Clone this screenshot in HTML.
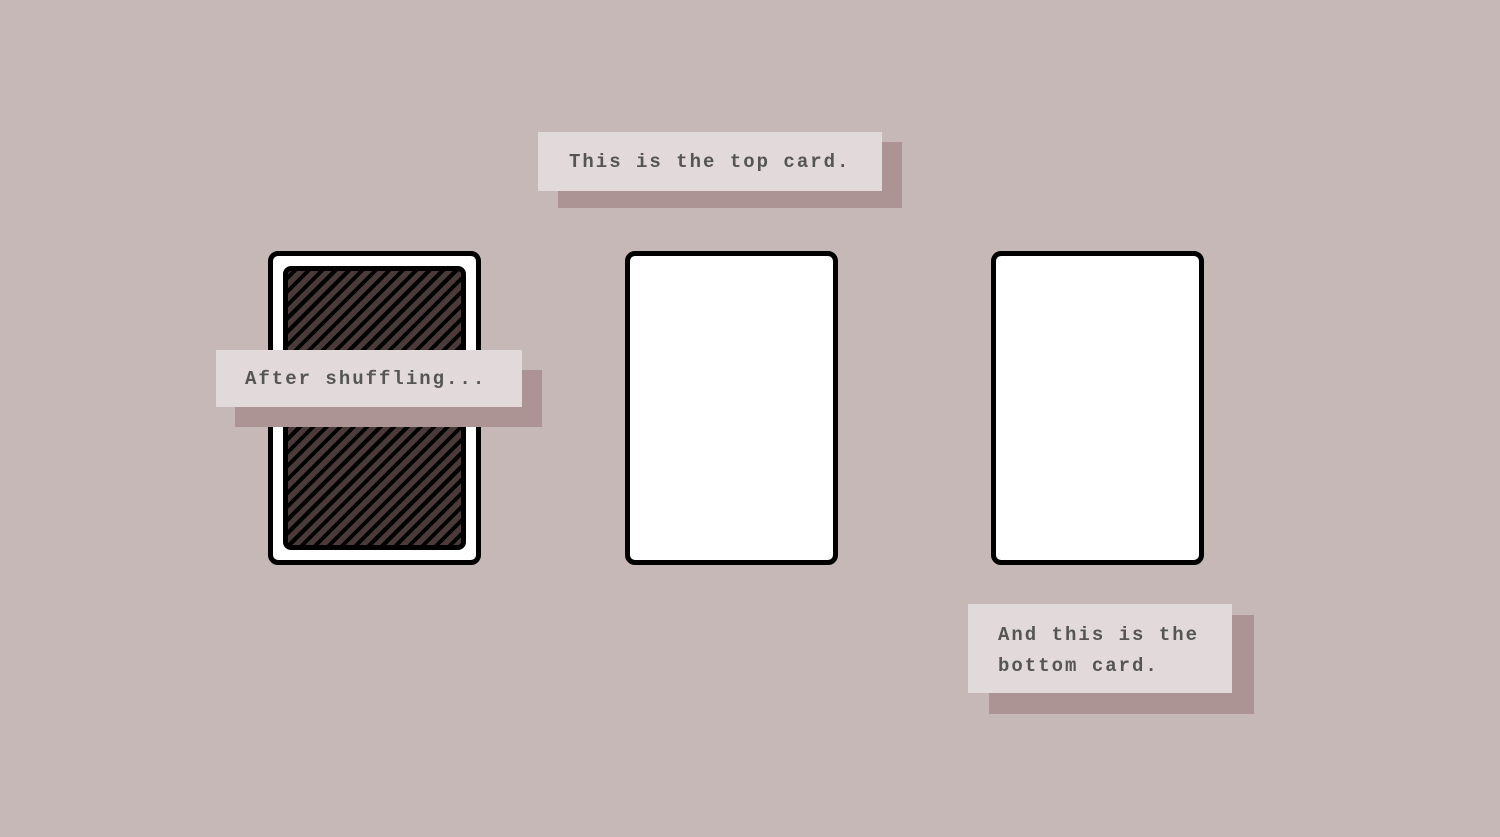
<!DOCTYPE html>
<html><head><meta charset="utf-8"><style>
body{margin:0;width:1500px;height:837px;background:#c7b8b8;position:relative;overflow:hidden;font-family:"Liberation Mono",monospace;}
.card{position:absolute;top:251px;width:203px;height:304px;border:5px solid #000;border-radius:10px;background:#fff;}
.back{position:absolute;left:10px;top:10px;right:10px;bottom:10px;border:5px solid #000;border-radius:8px;
background:repeating-linear-gradient(-45deg,#4a3a3a 0 5.5px,#000 5.5px 9.5px);}
.sh{position:absolute;background:#ad9494;}
.lb{position:absolute;background:#e2dada;color:#555;font-weight:bold;font-size:19px;letter-spacing:2.0px;box-sizing:border-box;white-space:nowrap;}
</style></head><body>
<div class="card" style="left:268px"><div class="back"></div></div>
<div class="card" style="left:625px"></div>
<div class="card" style="left:991px"></div>

<div class="sh" style="left:558px;top:142px;width:344px;height:66px"></div>
<div class="lb" style="left:538px;top:132px;width:344px;height:59px;padding:19px 0 0 31px">This is the top card.</div>

<div class="sh" style="left:235px;top:370px;width:307px;height:57px"></div>
<div class="lb" style="left:216px;top:350px;width:306px;height:57px;padding:18px 0 0 29px">After shuffling...</div>

<div class="sh" style="left:989px;top:615px;width:265px;height:99px"></div>
<div class="lb" style="left:968px;top:604px;width:264px;height:89px;padding:16px 0 0 30px;line-height:31px;white-space:normal">And this is the<br>bottom card.</div>
</body></html>
